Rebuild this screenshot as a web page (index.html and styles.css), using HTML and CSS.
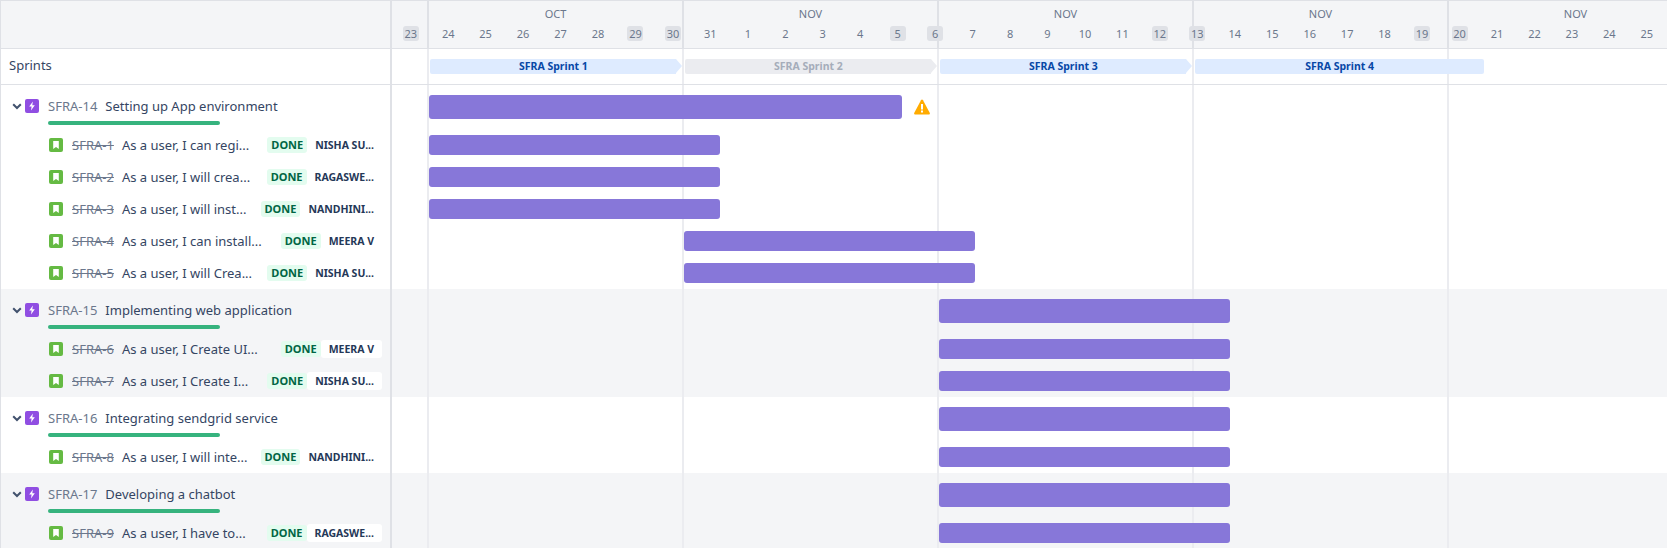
FILE: index.html
```html
<!DOCTYPE html>
<html lang="en">

<head>
    <meta charset="UTF-8">
    <title>Roadmap</title>
    <link rel="stylesheet" href="styles.css">
</head>

<body>
    <svg class="defs" width="0" height="0">
        <symbol id="epic" viewBox="0 0 14 14">
            <rect width="14" height="14" rx="2" fill="#904ee2" />
            <path d="M7.9 2.6 4.2 7.6h2.4l-.6 3.8 3.8-5.1H7.3z" fill="#fff" />
        </symbol>
        <symbol id="story" viewBox="0 0 14 14">
            <rect width="14" height="14" rx="2" fill="#65ba43" />
            <path d="M4.2 3h5.6v8L7 8.9 4.2 11z" fill="#fff" />
        </symbol>
        <symbol id="chev" viewBox="0 0 10 7">
            <path d="M1.2 1.2 5 5l3.8-3.8" fill="none" stroke="#42526e" stroke-width="2" />
        </symbol>
    </svg>

    <div class="row head">
        <div class="side"></div>
        <div class="track">
            <div class="months">
                <span>OCT</span><span>NOV</span><span>NOV</span><span>NOV</span><span>NOV</span>
            </div>
            <div class="days">
                <span class="off">23</span><span>24</span><span>25</span><span>26</span><span>27</span><span>28</span><span class="off">29</span>
                <span class="off">30</span><span>31</span><span>1</span><span>2</span><span>3</span><span>4</span><span class="off">5</span>
                <span class="off">6</span><span>7</span><span>8</span><span>9</span><span>10</span><span>11</span><span class="off">12</span>
                <span class="off">13</span><span>14</span><span>15</span><span>16</span><span>17</span><span>18</span><span class="off">19</span>
                <span class="off">20</span><span>21</span><span>22</span><span>23</span><span>24</span><span>25</span><span class="off">26</span>
            </div>
        </div>
    </div>

    <div class="row sprints">
        <div class="side">Sprints</div>
        <div class="track">
            <div class="sprint s1 arrow">SFRA Sprint 1</div>
            <div class="sprint s2 arrow closed">SFRA Sprint 2</div>
            <div class="sprint s3 arrow">SFRA Sprint 3</div>
            <div class="sprint s4">SFRA Sprint 4</div>
        </div>
    </div>

    <div class="row epic">
        <div class="side">
            <div class="epic-line">
                <svg class="chev"><use href="#chev" /></svg>
                <svg class="icon"><use href="#epic" /></svg>
                <span class="key">SFRA-14</span>
                <span class="title">Setting up App environment</span>
            </div>
            <div class="progress"></div>
        </div>
        <div class="track">
            <div class="bar big">
            </div>
            <svg class="warn" viewBox="0 0 16 16">
                <path d="M7 1.2c.5-.8 1.5-.8 2 0l6.7 12.6c.4.8 0 1.7-1 1.7H1.300c-1 0-1.400-.9-1-1.700z" fill="#ffab00" />
                <rect x="7" y="5" width="2" height="5.500" fill="#fff" />
                <rect x="7" y="11.500" width="2" height="2" fill="#fff" />
            </svg>
        </div>
    </div>
    <div class="row child">
        <div class="side">
            <svg class="icon"><use href="#story" /></svg>
            <span class="key">SFRA-1</span>
            <span class="title">As a user, I can regi...</span>
            <span class="done">DONE</span>
            <span class="who">NISHA SU...</span>
        </div>
        <div class="track"><div class="bar w1"></div></div>
    </div>
    <div class="row child">
        <div class="side">
            <svg class="icon"><use href="#story" /></svg>
            <span class="key">SFRA-2</span>
            <span class="title">As a user, I will crea...</span>
            <span class="done">DONE</span>
            <span class="who">RAGASWE...</span>
        </div>
        <div class="track"><div class="bar w1"></div></div>
    </div>
    <div class="row child">
        <div class="side">
            <svg class="icon"><use href="#story" /></svg>
            <span class="key">SFRA-3</span>
            <span class="title">As a user, I will inst...</span>
            <span class="done">DONE</span>
            <span class="who">NANDHINI...</span>
        </div>
        <div class="track"><div class="bar w1"></div></div>
    </div>
    <div class="row child">
        <div class="side">
            <svg class="icon"><use href="#story" /></svg>
            <span class="key">SFRA-4</span>
            <span class="title">As a user, I can install...</span>
            <span class="done">DONE</span>
            <span class="who">MEERA V</span>
        </div>
        <div class="track"><div class="bar w2"></div></div>
    </div>
    <div class="row child">
        <div class="side">
            <svg class="icon"><use href="#story" /></svg>
            <span class="key">SFRA-5</span>
            <span class="title">As a user, I will Crea...</span>
            <span class="done">DONE</span>
            <span class="who">NISHA SU...</span>
        </div>
        <div class="track"><div class="bar w2"></div></div>
    </div>

    <div class="row epic band">
        <div class="side">
            <div class="epic-line">
                <svg class="chev"><use href="#chev" /></svg>
                <svg class="icon"><use href="#epic" /></svg>
                <span class="key">SFRA-15</span>
                <span class="title">Implementing web application</span>
            </div>
            <div class="progress"></div>
        </div>
        <div class="track"><div class="bar big w3"></div></div>
    </div>
    <div class="row child band">
        <div class="side">
            <svg class="icon"><use href="#story" /></svg>
            <span class="key">SFRA-6</span>
            <span class="title">As a user, I Create UI...</span>
            <span class="done">DONE</span>
            <span class="who">MEERA V</span>
        </div>
        <div class="track"><div class="bar w3"></div></div>
    </div>
    <div class="row child band">
        <div class="side">
            <svg class="icon"><use href="#story" /></svg>
            <span class="key">SFRA-7</span>
            <span class="title">As a user, I Create I...</span>
            <span class="done">DONE</span>
            <span class="who">NISHA SU...</span>
        </div>
        <div class="track"><div class="bar w3"></div></div>
    </div>

    <div class="row epic">
        <div class="side">
            <div class="epic-line">
                <svg class="chev"><use href="#chev" /></svg>
                <svg class="icon"><use href="#epic" /></svg>
                <span class="key">SFRA-16</span>
                <span class="title">Integrating sendgrid service</span>
            </div>
            <div class="progress"></div>
        </div>
        <div class="track"><div class="bar big w3"></div></div>
    </div>
    <div class="row child">
        <div class="side">
            <svg class="icon"><use href="#story" /></svg>
            <span class="key">SFRA-8</span>
            <span class="title">As a user, I will inte...</span>
            <span class="done">DONE</span>
            <span class="who">NANDHINI...</span>
        </div>
        <div class="track"><div class="bar w3"></div></div>
    </div>

    <div class="row epic band">
        <div class="side">
            <div class="epic-line">
                <svg class="chev"><use href="#chev" /></svg>
                <svg class="icon"><use href="#epic" /></svg>
                <span class="key">SFRA-17</span>
                <span class="title">Developing a chatbot</span>
            </div>
            <div class="progress"></div>
        </div>
        <div class="track"><div class="bar big w3"></div></div>
    </div>
    <div class="row child band">
        <div class="side">
            <svg class="icon"><use href="#story" /></svg>
            <span class="key">SFRA-9</span>
            <span class="title">As a user, I have to...</span>
            <span class="done">DONE</span>
            <span class="who">RAGASWE...</span>
        </div>
        <div class="track"><div class="bar w3"></div></div>
    </div>
</body>

</html>
```

FILE: styles.css
```css
html,
body {
    margin: 0;
    height: 548px;
    overflow: hidden;
    background-color: #fff;
    font-family: "Noto Sans", "Open Sans", sans-serif;
    color: #344563;
}

.defs {
    display: block;
    height: 0;
}

.row {
    display: flex;
    box-sizing: border-box;
}

.side {
    box-sizing: border-box;
    flex: 0 0 392px;
    border-left: 1px solid #dfe1e6;
    border-right: 2px solid #dfe1e6;
}

/* day columns, 35 of them; the week lines repeat every 7 */
.track {
    flex: 0 0 1275px;
    display: grid;
    grid-template-columns: repeat(35, 1fr);
    background-image: linear-gradient(to right, #ebecf0 2px, transparent 2px);
    background-size: 255px 100%;
    background-position: 35px 0;
}

/* header */
.head {
    height: 49px;
    background-color: #f4f5f7;
    border-top: 1px solid #dfe1e6;
    border-bottom: 1px solid #dfe1e6;
}

.head .track {
    display: block;
    background-image: linear-gradient(to right, #dfe1e6 2px, transparent 2px);
}

.months {
    display: grid;
    grid-template-columns: 36px repeat(5, 255px);
    height: 25px;
    padding-top: 4px;
    box-sizing: border-box;
    font-size: 11px;
    line-height: 18px;
    color: #6b778c;
    text-align: center;
}

.months span:first-child {
    grid-column: 2;
}

.days {
    display: grid;
    grid-template-columns: repeat(35, 1fr);
    font-size: 11px;
    line-height: 15px;
    color: #6b778c;
    text-align: center;
}

.days span {
    justify-self: center;
    width: 16px;
    border-radius: 3px;
}

.days .off {
    background-color: #dfe1e6;
}

/* sprints */
.sprints {
    height: 36px;
    border-bottom: 1px solid #dfe1e6;
}

.sprints .side {
    padding-left: 8px;
    font-size: 13px;
    line-height: 33px;
}

.sprints .track {
    align-items: start;
    padding-top: 10px;
}

.sprint {
    position: relative;
    height: 15px;
    margin-left: 2px;
    margin-right: 1px;
    border-radius: 2px;
    background-color: #deebff;
    color: #0747a6;
    font-size: 10.500px;
    font-weight: 700;
    line-height: 15px;
    text-align: center;
}

.arrow {
    margin-right: 7px;
    border-radius: 2px 0 0 2px;
}

.arrow::after {
    content: "";
    position: absolute;
    top: 0;
    left: 100%;
    border-left: 6px solid #deebff;
    border-top: 7.500px solid transparent;
    border-bottom: 7.500px solid transparent;
}

.closed {
    background-color: #ebecf0;
    color: #a5adba;
}

.closed::after {
    border-left-color: #ebecf0;
}

.s1 { grid-column: 2 / 9; }
.s2 { grid-column: 9 / 16; }
.s3 { grid-column: 16 / 23; }
.s4 { grid-column: 23 / 31; }

/* left column texts */
.icon {
    flex: none;
    width: 14px;
    height: 14px;
}

.key {
    flex: none;
    font-size: 13px;
    color: #6b778c;
}

.title {
    font-size: 13px;
    white-space: nowrap;
}

.band {
    background-color: #f4f5f7;
}

/* epics */
.epic {
    height: 44px;
}

.epic .side {
    padding: 13px 0 0 11px;
}

.epic-line {
    display: flex;
    align-items: center;
    height: 16px;
}

.chev {
    flex: none;
    width: 10px;
    height: 7px;
    margin-right: 3px;
}

.epic .icon {
    margin-right: 9px;
}

.epic .key {
    margin-right: 8px;
}

.progress {
    width: 172px;
    height: 4px;
    margin: 7px 0 0 36px;
    border-radius: 2px;
    background-color: #36b37e;
}

/* stories */
.child {
    height: 32px;
}

.child .side {
    display: flex;
    align-items: center;
    padding: 0 8px 0 48px;
}

.child .icon {
    margin-right: 9px;
}

.child .key {
    margin-right: 8px;
    text-decoration: line-through;
}

.child .title {
    margin-right: auto;
}

.done {
    flex: none;
    padding: 0 4px;
    border-radius: 3px;
    background-color: #e3fcef;
    color: #006644;
    font-size: 11px;
    font-weight: 700;
    line-height: 16px;
}

.who {
    flex: none;
    padding: 0 8px;
    border-radius: 3px;
    background-color: #fff;
    color: #253858;
    font-size: 10.500px;
    font-weight: 700;
    line-height: 18px;
}

/* gantt bars */
.bar {
    grid-column: 2 / 10;
    align-self: center;
    height: 20px;
    margin-left: 1px;
    border-radius: 3px;
    background-color: #8777d9;
}

.big {
    grid-column: 2 / 15;
    align-self: start;
    height: 24px;
    margin-top: 10px;
}

.w2 { grid-column: 9 / 17; }
.w3 { grid-column: 16 / 24; }

.warn {
    grid-column: 15 / 16;
    width: 16px;
    height: 16px;
    margin: 14px 0 0 12px;
}
```
